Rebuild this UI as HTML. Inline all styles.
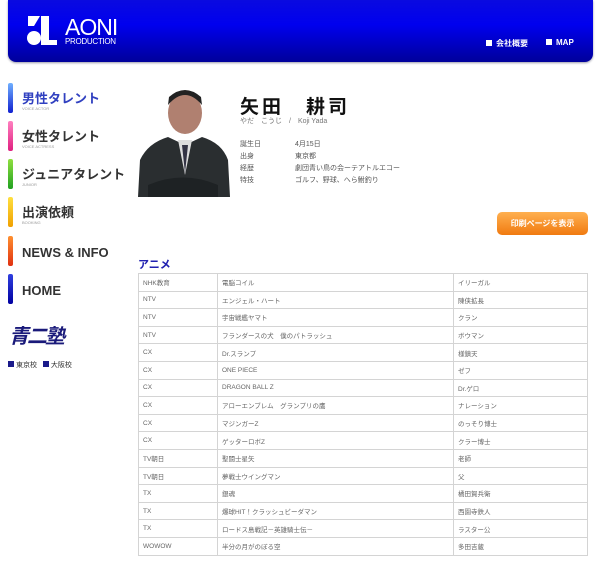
<!DOCTYPE html>
<html><head><meta charset="utf-8"><style>
*{margin:0;padding:0;box-sizing:border-box}
body{width:600px;height:570px;background:#fff;font-family:"Liberation Sans","Noto Sans CJK JP",sans-serif;position:relative;overflow:hidden}
.hdr{position:absolute;left:8px;top:0;width:585px;height:62px;border-radius:0 0 8px 8px;background:linear-gradient(#0a0ae0,#0000ee 40%,#00009a);box-shadow:0 1px 2px #99a}
.logo{position:absolute;left:18px;top:16px}
.aoni{position:absolute;left:57px;top:14px;color:#fff;font-size:23px;letter-spacing:-1px}
.prod{position:absolute;left:57px;top:37px;color:#fff;font-size:8px;letter-spacing:-.3px}
.hl{position:absolute;top:38px;color:#fff;font-size:8px;font-weight:bold}
.hl:before{content:"";display:inline-block;width:6px;height:6px;background:#fff;margin-right:4px;vertical-align:-0px}
.nav{position:absolute;left:8px;width:125px}
.bar{position:absolute;left:0;top:0;width:5px;height:30px;border-radius:2px}
.nt{position:absolute;left:14px;top:5px;font-size:13px;font-weight:bold;color:#333;white-space:nowrap}
.ns{position:absolute;left:14px;top:23px;font-size:4px;color:#999}
.photo{position:absolute;left:138px;top:85px;width:92px;height:112px;overflow:hidden;background:#fff}
h1{position:absolute;left:240px;top:92px;font-size:19px;letter-spacing:3px;color:#111}
.kana{position:absolute;left:240px;top:116px;font-size:7px;color:#777}
.info{position:absolute;left:240px;top:139px;font-size:7px;color:#555;line-height:12px}
.info span{display:inline-block;width:55px}
.btn{position:absolute;left:497px;top:212px;width:91px;height:23px;border-radius:5px;background:linear-gradient(#ffb050,#f07a10);color:#fff;font-size:8px;font-weight:bold;text-align:center;line-height:23px}
.sec{position:absolute;left:138px;top:256px;font-size:11px;font-weight:bold;color:#2020b0}
table{position:absolute;left:138px;top:273px;width:450px;border-collapse:collapse;font-size:6.5px;color:#666}
td{border:1px solid #d4d4d4;height:17.6px;padding:0 4px}
</style></head><body>
<div class="hdr">
<svg class="logo" width="32" height="30" viewBox="0 0 32 30"><polygon points="2,0 14,0 8,10 2,10" fill="#fff"/><circle cx="8" cy="22" r="7" fill="#fff"/><rect x="15" y="0" width="8" height="29" fill="#fff"/><rect x="15" y="24" width="16" height="5" fill="#fff"/></svg>
<div class="aoni">AONI</div><div class="prod">PRODUCTION</div>
<div class="hl" style="left:478px">会社概要</div><div class="hl" style="left:538px">MAP</div>
</div>
<div class="nav" style="top:83px"><div class="bar" style="background:linear-gradient(#70b0ff,#1020d0)"></div><div class="nt" style="color:#3040c0">男性タレント</div><div class="ns">VOICE ACTOR</div></div>
<div class="nav" style="top:121px"><div class="bar" style="background:linear-gradient(#ff80c0,#e02080)"></div><div class="nt">女性タレント</div><div class="ns">VOICE ACTRESS</div></div>
<div class="nav" style="top:159px"><div class="bar" style="background:linear-gradient(#90e040,#20a020)"></div><div class="nt">ジュニアタレント</div><div class="ns">JUNIOR</div></div>
<div class="nav" style="top:197px"><div class="bar" style="background:linear-gradient(#ffe040,#f0a000)"></div><div class="nt">出演依頼</div><div class="ns">BOOKING</div></div>
<div class="nav" style="top:236px"><div class="bar" style="background:linear-gradient(#ff9030,#e03010)"></div><div class="nt" style="top:9px">NEWS &amp; INFO</div></div>
<div class="nav" style="top:274px"><div class="bar" style="background:linear-gradient(#3040e0,#0000a0)"></div><div class="nt" style="top:9px">HOME</div></div>
<div style="position:absolute;left:9px;top:320px;font-size:20px;font-weight:bold;color:#1a1a7a;font-style:italic;letter-spacing:-2px">青二塾</div>
<div style="position:absolute;left:8px;top:360px;font-size:7px;color:#333"><span style="display:inline-block;width:6px;height:6px;background:#1a1a8a;margin-right:2px"></span>東京校 &nbsp; <span style="display:inline-block;width:6px;height:6px;background:#1a1a8a;margin-right:2px"></span>大阪校</div>
<div class="photo"><svg width="92" height="112"><ellipse cx="47" cy="28" rx="17" ry="21" fill="#b08070"/><path d="M30,20 Q47,0 64,20 L63,12 Q47,-2 31,12Z" fill="#222"/><path d="M0,112 L2,75 Q10,58 30,52 L47,60 L64,52 Q84,58 90,75 L92,112Z" fill="#2a2e30"/><path d="M40,55 L47,90 L54,55Z" fill="#ddd"/><path d="M44,60 L47,88 L50,60Z" fill="#334"/><path d="M10,100 Q45,85 80,100 L80,112 L10,112Z" fill="#1e2224"/></svg></div>
<h1>矢田　耕司</h1>
<div class="kana">やだ　こうじ　/　Koji Yada</div>
<div class="info"><span>誕生日</span>4月15日<br><span>出身</span>東京都<br><span>経歴</span>劇団青い鳥の会ーテアトルエコー<br><span>特技</span>ゴルフ、野球、へら鮒釣り</div>
<div class="btn">印刷ページを表示</div>
<div class="sec">アニメ</div>
<table>
<col style="width:79px"><col style="width:236px"><col>
<tr><td>NHK教育</td><td>電脳コイル</td><td>イリーガル</td></tr>
<tr><td>NTV</td><td>エンジェル・ハート</td><td>陳侠拡長</td></tr>
<tr><td>NTV</td><td>宇宙戦艦ヤマト</td><td>クラン</td></tr>
<tr><td>NTV</td><td>フランダースの犬　僕のパトラッシュ</td><td>ボウマン</td></tr>
<tr><td>CX</td><td>Dr.スランプ</td><td>様鎮天</td></tr>
<tr><td>CX</td><td>ONE PIECE</td><td>ゼフ</td></tr>
<tr><td>CX</td><td>DRAGON BALL Z</td><td>Dr.ゲロ</td></tr>
<tr><td>CX</td><td>アローエンブレム　グランプリの鷹</td><td>ナレーション</td></tr>
<tr><td>CX</td><td>マジンガーZ</td><td>のっそり博士</td></tr>
<tr><td>CX</td><td>ゲッターロボZ</td><td>クラー博士</td></tr>
<tr><td>TV朝日</td><td>聖闘士星矢</td><td>老師</td></tr>
<tr><td>TV朝日</td><td>夢戦士ウイングマン</td><td>父</td></tr>
<tr><td>TX</td><td>銀魂</td><td>橘田賀兵衛</td></tr>
<tr><td>TX</td><td>爆球HIT！クラッシュビーダマン</td><td>西園寺鉄人</td></tr>
<tr><td>TX</td><td>ロードス島戦記－英雄騎士伝－</td><td>ラスター公</td></tr>
<tr><td>WOWOW</td><td>半分の月がのぼる空</td><td>多田吉蔵</td></tr>
</table>
</body></html>
